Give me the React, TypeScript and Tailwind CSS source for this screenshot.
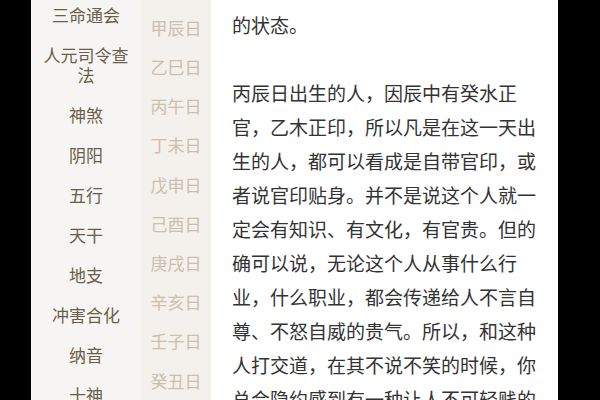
import React from "react";

const left = ["三命通会", "人元司令查\n法", "神煞", "阴阳", "五行", "天干", "地支", "冲害合化", "纳音", "十神"];
const days = ["甲辰日", "乙巳日", "丙午日", "丁未日", "戊申日", "己酉日", "庚戌日", "辛亥日", "壬子日", "癸丑日"];

const lines = [
  "的状态。",
  "",
  "丙辰日出生的人，因辰中有癸水正",
  "官，乙木正印，所以凡是在这一天出",
  "生的人，都可以看成是自带官印，或",
  "者说官印贴身。并不是说这个人就一",
  "定会有知识、有文化，有官贵。但的",
  "确可以说，无论这个人从事什么行",
  "业，什么职业，都会传递给人不言自",
  "尊、不怒自威的贵气。所以，和这种",
  "人打交道，在其不说不笑的时候，你",
  "总会隐约感到有一种让人不可轻贱的",
];

export default function App() {
  return (
    <div
      className="flex w-[600px] h-[400px] overflow-hidden bg-black"
      style={{ fontFamily: '"Noto Sans CJK SC", "Noto Sans", sans-serif' }}
    >
      <div className="w-[31px] shrink-0 bg-black" />
      <div className="w-[110px] shrink-0 bg-[#f6f5f3] flex flex-col items-center mt-[-5px]">
        {left.map((t) => (
          <div
            key={t}
            className="py-[10px] text-[17px] leading-[20px] text-[#6b5e48] text-center whitespace-pre-line"
          >
            {t}
          </div>
        ))}
      </div>
      <div className="w-[70px] shrink-0 bg-[#f4f0ec] flex flex-col items-center pt-[8px]">
        {days.map((d) => (
          <div key={d} className="h-[40px] flex items-center text-[17px] text-[#cbbfad]">
            {d}
          </div>
        ))}
      </div>
      <div className="w-[347px] shrink-0 bg-white pl-[21px] pt-[8px]">
        {lines.map((l, i) => (
          <div
            key={i}
            className="h-[34px] flex items-center text-[19px] text-[#333333] whitespace-nowrap"
          >
            {l || "\u00a0"}
          </div>
        ))}
      </div>
      <div className="flex-1 bg-black" />
    </div>
  );
}
